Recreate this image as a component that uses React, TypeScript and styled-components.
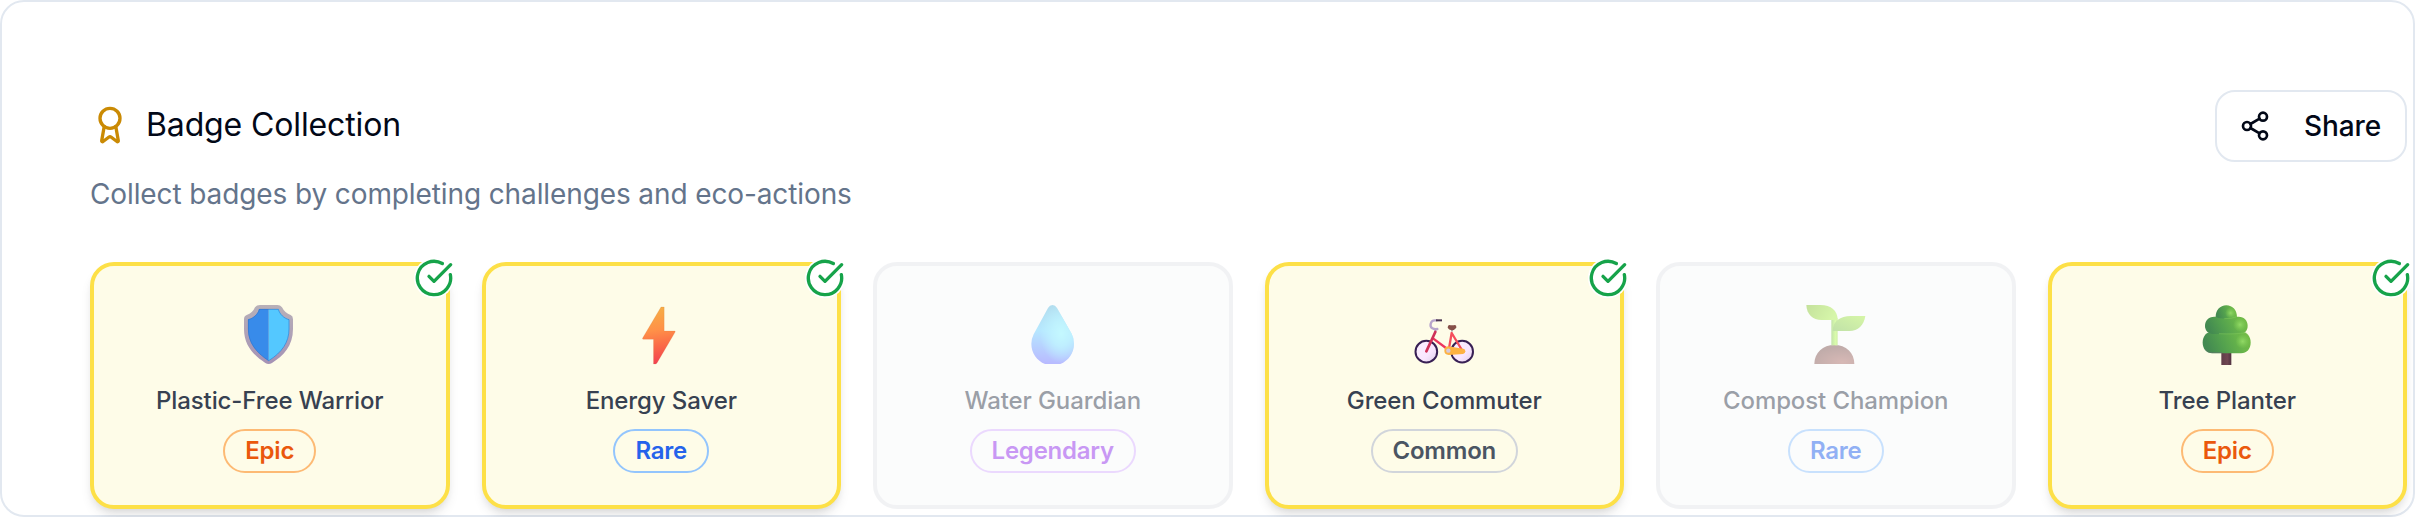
import React from "react";
import styled, { createGlobalStyle, css } from "styled-components";
import { Award, CircleCheckBig, Share2 } from "lucide-react";

const GlobalStyle = createGlobalStyle`
  *, *::before, *::after { box-sizing: border-box; }
  body {
    margin: 0;
    background: #ffffff;
    font-family: Inter, "Liberation Sans", sans-serif;
    color: #020817;
  }
`;

const Panel = styled.section`
  width: 2415px;
  height: 517px;
  padding: 88px 6px 0 88px;
  border: 2px solid #e2e8f0;
  border-radius: 24px;
  background: #ffffff;
`;

const Header = styled.header`
  display: flex;
  align-items: center;
  justify-content: space-between;
  height: 72px;
`;

const Title = styled.h3`
  display: flex;
  align-items: center;
  gap: 16px;
  margin: 0 0 2px;
  font-size: 32px;
  line-height: 40px;
  font-weight: 400;
  letter-spacing: -0.13px;
  color: #020817;

  svg { color: #ca8a04; }
`;

const ShareButton = styled.button`
  display: inline-flex;
  align-items: center;
  gap: 33px;
  height: 72px;
  width: 192px;
  padding: 0 0 0 22px;
  border: 2px solid #e2e8f0;
  border-radius: 20px;
  background: #ffffff;
  color: #020817;
  font: 500 28px/40px Inter, "Liberation Sans", sans-serif;
  letter-spacing: -0.1px;
`;

const Description = styled.p`
  margin: 12px 0 48px;
  font-size: 28px;
  line-height: 40px;
  letter-spacing: -0.11px;
  color: #64748b;
`;

const BadgeGrid = styled.div`
  display: grid;
  grid-template-columns: repeat(6, minmax(0, 1fr));
  gap: 32px;
`;

const BadgeCard = styled.article<{ $earned: boolean }>`
  position: relative;
  display: flex;
  flex-direction: column;
  align-items: center;
  height: 247px;
  padding: 32px;
  border: 4px solid #e5e7eb;
  border-radius: 24px;
  background: #f9fafb;
  opacity: 0.5;
  ${(p) =>
    p.$earned &&
    css`
      border-color: #fde047;
      background: #fefce8;
      opacity: 1;
      box-shadow: 0 8px 12px -2px rgba(0, 0, 0, 0.1), 0 4px 8px -4px rgba(0, 0, 0, 0.1);
    `}
`;

const EarnedMark = styled.span`
  position: absolute;
  top: -8px;
  right: -8px;
  width: 40px;
  height: 40px;
  border-radius: 50%;
  background: #ffffff;
  color: #16a34a;

  svg { display: block; }
`;

const Picture = styled.svg`
  display: block;
  flex: none;
  width: 60px;
  height: 60px;
  margin: 7px 0 20px;
`;

const BadgeName = styled.div`
  font-size: 24px;
  line-height: 32px;
  font-weight: 500;
  letter-spacing: -0.1px;
  color: #374151;
  white-space: nowrap;
`;

type Rarity = "Epic" | "Rare" | "Legendary" | "Common";

const rarityColors: Record<Rarity, { text: string; line: string }> = {
  Epic: { text: "#ea580c", line: "#fdba74" },
  Rare: { text: "#2563eb", line: "#93c5fd" },
  Legendary: { text: "#9333ea", line: "#d8b4fe" },
  Common: { text: "#4b5563", line: "#d1d5db" },
};

const RarityPill = styled.span<{ $rarity: Rarity }>`
  margin-top: 12px;
  padding: 4px 20px;
  border: 2px solid ${(p) => rarityColors[p.$rarity].line};
  border-radius: 22px;
  color: ${(p) => rarityColors[p.$rarity].text};
  font-size: 24px;
  line-height: 32px;
  font-weight: 600;
  letter-spacing: -0.23px;
`;

const Shield = () => (
  <Picture viewBox="0 0 180 180">
    <defs>
      <linearGradient id="rim" x1="0" y1="0" x2="0" y2="1">
        <stop offset="0" stopColor="#b8b0b8" />
        <stop offset="1" stopColor="#a592b5" />
      </linearGradient>
    </defs>
    <path fill="url(#rim)" d="M60 0H112Q121 0 126 7Q135 25 152 30Q159 33 159 43V72C159 122 131 152 96 174Q86 180 76 174C42 152 12 122 12 72V43Q12 33 20 30Q38 24 45 7Q50 0 60 0Z" />
    <path fill="#388bea" d="M86 12H57C54 27 40 39 24 43V72C24 112 47 142 86 168Z" />
    <path fill="#54c8ff" d="M86 12H116C120 27 132 39 148 43V72C148 112 126 142 86 168Z" />
    <path fill="none" stroke="#2f6fc8" strokeOpacity=".55" strokeWidth="3" d="M86 167C47 142 25 112 25 72V44C40 40 54 28 58 13H115C119 28 132 40 147 44V72C147 112 126 142 86 167" />
  </Picture>
);

const Bolt = () => (
  <Picture viewBox="0 0 180 180">
    <defs>
      <linearGradient id="bolt" x1=".4" y1="0" x2=".5" y2="1">
        <stop offset="0" stopColor="#f6ae45" />
        <stop offset=".4" stopColor="#ff9148" />
        <stop offset=".7" stopColor="#fa6848" />
        <stop offset="1" stopColor="#f23f51" />
      </linearGradient>
    </defs>
    <path fill="url(#bolt)" stroke="#c9783e" strokeOpacity=".35" strokeWidth="1.5" d="M90 6H99.5V78H131Q134 78 132 82L78 174Q76 177 73 177H67.5V103H37Q33 103 35 99Z" />
  </Picture>
);

const Drop = () => (
  <Picture viewBox="0 0 180 180">
    <defs>
      <linearGradient id="drop" x1=".5" y1="0" x2=".42" y2="1">
        <stop offset="0" stopColor="#68bddf" />
        <stop offset=".45" stopColor="#70d2ff" />
        <stop offset=".7" stopColor="#72a9ff" />
        <stop offset="1" stopColor="#7477ff" />
      </linearGradient>
      <radialGradient id="dropLight" cx=".7" cy=".48" r=".5">
        <stop offset="0" stopColor="#8bf4ff" />
        <stop offset=".45" stopColor="#83eaff" stopOpacity=".8" />
        <stop offset="1" stopColor="#83eaff" stopOpacity="0" />
      </radialGradient>
    </defs>
    <path fill="url(#drop)" d="M75 9Q80 0 88.500 0Q97 0 102 9L146 86Q153 99 153 116C153 144 136 167 112 177H66C42 167 25 144 25 116Q25 102 32 88Z" />
    <path fill="url(#dropLight)" d="M75 9Q80 0 88.500 0Q97 0 102 9L146 86Q153 99 153 116C153 144 136 167 112 177H66C42 167 25 144 25 116Q25 102 32 88Z" />
  </Picture>
);

const Bicycle = () => (
  <Picture viewBox="0 0 180 180">
    <defs>
      <linearGradient id="wheel" x1="0" y1="0" x2="1" y2="1">
        <stop offset="0" stopColor="#fbf0ff" />
        <stop offset=".6" stopColor="#f9e6ff" />
        <stop offset="1" stopColor="#ddcce6" />
      </linearGradient>
    </defs>
    <g fill="url(#wheel)" stroke="#382054" strokeWidth="6">
      <circle cx="37" cy="140" r="32.500" />
      <circle cx="144.500" cy="140" r="32.500" />
    </g>
    <g fill="none" strokeLinecap="round" strokeLinejoin="round">
      <path stroke="#b7a4cb" strokeWidth="7" d="M68 46H62C50 46 45 63 55 70Q60 73 70 72M65 73L63 82" />
      <path stroke="#49334f" strokeWidth="6" strokeLinecap="butt" d="M66 46H84" />
      <path stroke="#ed365e" strokeWidth="7" d="M57 100L100 132" />
      <path stroke="#f54d5b" strokeWidth="7" d="M113 84L105 130M113 84L142 132" />
      <path stroke="#cf3158" strokeWidth="8" d="M64 81L37 139" />
      <path stroke="#a99aab" strokeWidth="5" d="M114 70V78" />
    </g>
    <path fill="#865048" d="M106 60Q115 62 123 60Q128 61 127 68Q121 76 113 76Q104 75 101 68Q101 61 106 60Z" />
    <path fill="#fdb242" d="M102 124L148 131Q154 132 154 139Q154 146 147 147L104 150Q91 148 91 137Q91 125 102 124Z" />
    <circle cx="103" cy="137" r="6.500" fill="#d5c9dc" />
  </Picture>
);

const Sprout = () => (
  <Picture viewBox="0 0 180 180">
    <defs>
      <linearGradient id="leafLeft" x1="0" y1="0" x2="1" y2=".3">
        <stop offset="0" stopColor="#8bc53c" />
        <stop offset="1" stopColor="#aeee55" />
      </linearGradient>
      <linearGradient id="leafRight" x1="0" y1="1" x2="1" y2="0">
        <stop offset="0" stopColor="#83c553" />
        <stop offset="1" stopColor="#aeee52" />
      </linearGradient>
      <linearGradient id="stem">
        <stop offset="0" stopColor="#88ca55" />
        <stop offset=".65" stopColor="#b4f85a" />
        <stop offset="1" stopColor="#a5e257" />
      </linearGradient>
      <radialGradient id="soil" cx=".7" cy=".9" r=".8">
        <stop offset="0" stopColor="#b0746e" />
        <stop offset="1" stopColor="#835b57" />
      </radialGradient>
    </defs>
    <path fill="url(#soil)" d="M25 177C25 143 51 120 85 120C120 120 145 143 145 177Z" />
    <path fill="url(#stem)" d="M76 40H95V121H76Z" />
    <path fill="url(#leafLeft)" d="M1 0H43C76 0 94 17 95 43L85 45H47C20 45 2 27 1 0Z" />
    <path fill="url(#leafRight)" d="M178 33H134C103 33 80 49 80 78H130C156 78 174 60 178 33Z" />
  </Picture>
);

const Tree = () => (
  <Picture viewBox="0 0 180 180">
    <defs>
      <linearGradient id="foliage" x1="0" y1=".2" x2="1" y2="0">
        <stop offset="0" stopColor="#438a51" />
        <stop offset=".35" stopColor="#54a24e" />
        <stop offset=".7" stopColor="#69b64a" />
        <stop offset="1" stopColor="#76bd45" />
      </linearGradient>
      <radialGradient id="glow">
        <stop offset="0" stopColor="#92d966" />
        <stop offset="1" stopColor="#80ce55" stopOpacity="0" />
      </radialGradient>
      <linearGradient id="trunk">
        <stop offset="0" stopColor="#603d49" />
        <stop offset=".6" stopColor="#704752" />
        <stop offset="1" stopColor="#513341" />
      </linearGradient>
    </defs>
    <path fill="url(#trunk)" d="M73 140H103V180H73Z" />
    <path fill="url(#foliage)" d="M45 80H132C150 80 161 94 161 112C161 133 149 145 132 145H45C28 145 17 132 17 112C17 94 28 80 45 80Z" />
    <path fill="url(#foliage)" d="M52 35H125C142 35 152 48 152 62C152 78 142 87 124 87H53C34 87 24 78 24 62C24 47 34 35 52 35Z" />
    <path fill="url(#foliage)" d="M56 36C56 16 69 1 88 1C107 1 120 16 120 36Q104 42 88 41Q67 41 56 36Z" />
    <path fill="none" stroke="#8bd35c" strokeOpacity=".65" strokeWidth="2" d="M66 86Q115 88 148 83M82 41Q105 42 119 35" />
    <circle cx="101" cy="24" r="17" fill="url(#glow)" />
    <circle cx="129" cy="59" r="21" fill="url(#glow)" />
    <circle cx="137" cy="109" r="22" fill="url(#glow)" />
    <path fill="none" stroke="#6f6879" strokeOpacity=".45" strokeWidth="3" d="M25 133Q33 143 47 143H76" />
  </Picture>
);

const badges: { name: string; rarity: Rarity; earned: boolean; Art: React.FC }[] = [
  { name: "Plastic-Free Warrior", rarity: "Epic", earned: true, Art: Shield },
  { name: "Energy Saver", rarity: "Rare", earned: true, Art: Bolt },
  { name: "Water Guardian", rarity: "Legendary", earned: false, Art: Drop },
  { name: "Green Commuter", rarity: "Common", earned: true, Art: Bicycle },
  { name: "Compost Champion", rarity: "Rare", earned: false, Art: Sprout },
  { name: "Tree Planter", rarity: "Epic", earned: true, Art: Tree },
];

export default function App() {
  return (
    <>
      <GlobalStyle />
      <Panel>
        <Header>
          <Title>
            <Award size={40} />
            Badge Collection
          </Title>
          <ShareButton type="button">
            <Share2 size={32} />
            Share
          </ShareButton>
        </Header>
        <Description>Collect badges by completing challenges and eco-actions</Description>
        <BadgeGrid>
          {badges.map(({ name, rarity, earned, Art }) => (
            <BadgeCard key={name} $earned={earned}>
              <Art />
              <BadgeName>{name}</BadgeName>
              <RarityPill $rarity={rarity}>{rarity}</RarityPill>
              {earned && (
                <EarnedMark>
                  <CircleCheckBig size={40} />
                </EarnedMark>
              )}
            </BadgeCard>
          ))}
        </BadgeGrid>
      </Panel>
    </>
  );
}
